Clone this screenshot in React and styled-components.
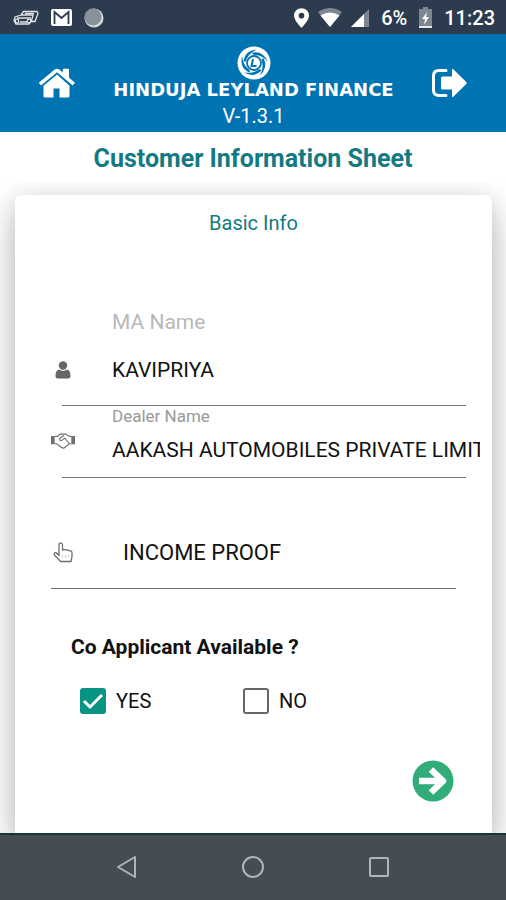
import React, { useState } from 'react';
import styled, { createGlobalStyle } from 'styled-components';

const GlobalStyle = createGlobalStyle`
  * {
    box-sizing: border-box;
  }
  body {
    margin: 0;
    background: #ffffff;
    font-family: Roboto, 'Liberation Sans', sans-serif;
    color: #111111;
  }
  button,
  input,
  select {
    font-family: inherit;
  }
`;

const Screen = styled.div`
  display: flex;
  flex-direction: column;
  min-height: 100vh;
`;

const StatusBar = styled.div`
  display: flex;
  align-items: center;
  justify-content: space-between;
  height: 34px;
  padding: 1px 11px 0 13px;
  background: #2c3b4d;
  color: #ffffff;
  font-size: 20px;
  font-weight: 500;
`;

const StatusGroup = styled.div`
  display: flex;
  align-items: center;
  gap: ${props => props.$gap}px;
`;

const Header = styled.header`
  display: flex;
  align-items: center;
  justify-content: space-between;
  height: 98px;
  padding: 0 38px;
  background: #0073b3;
  color: #ffffff;
`;

const IconButton = styled.button`
  display: flex;
  padding: 0;
  border: 0;
  background: none;
  color: inherit;
  cursor: pointer;
`;

const Brand = styled.div`
  display: flex;
  flex-direction: column;
  align-items: center;
  padding-top: 12px;
`;

const BrandName = styled.div`
  font-family: 'DejaVu Sans', sans-serif;
  font-size: 18px;
  font-weight: 700;
  line-height: 20px;
  white-space: nowrap;
`;

const Version = styled.div`
  font-size: 20px;
  line-height: 32px;
`;

const Title = styled.h1`
  margin: 0;
  padding-top: 3px;
  font-size: 25px;
  font-weight: 700;
  line-height: 47px;
  text-align: center;
  color: #127a80;
`;

const Main = styled.main`
  display: flex;
  flex: 1;
  padding: 13px 14px 0 15px;
  overflow: hidden;
`;

const Card = styled.form`
  flex: 1;
  min-width: 0;
  padding: 0 12px 0 36px;
  border-radius: 6px 6px 0 0;
  background: #ffffff;
  box-shadow: 0 16px 40px rgba(0, 0, 0, 0.24), 0 4px 20px rgba(0, 0, 0, 0.12);
`;

const Subtitle = styled.h2`
  margin: 0 24px 65px 0;
  padding-top: 14px;
  font-size: 20px;
  font-weight: 400;
  line-height: 28px;
  text-align: center;
  color: #127a80;
`;

const Field = styled.div`
  display: grid;
  grid-template-columns: 24px 1fr;
  column-gap: ${props => (props.$inset ? 48 : 37)}px;
  align-items: center;
  color: #666666;
`;

const Label = styled.label`
  grid-column: 2;
  font-size: ${props => (props.$small ? 17 : 21)}px;
  line-height: ${props => (props.$small ? 20 : 40)}px;
  color: ${props => (props.$small ? '#999999' : '#b8b8b8')};
`;

const FieldIcon = styled.span`
  display: flex;
  justify-content: center;
  align-self: ${props => (props.$top ? 'start' : 'center')};
  padding-top: ${props => (props.$top ? 6 : 0)}px;
`;

const TextInput = styled.input`
  width: 100%;
  min-width: 0;
  height: ${props => (props.$tall ? 56 : 48)}px;
  padding: 0;
  border: 0;
  outline: none;
  background: none;
  font-size: 21px;
  color: #111111;
`;

const Picker = styled.select`
  width: 100%;
  height: 72px;
  padding: 0;
  border: 0;
  outline: none;
  appearance: none;
  background: none;
  font-size: 22px;
  color: #111111;
`;

const Rule = styled.hr`
  height: 1px;
  margin: ${props => props.$gap || 0}px ${props => (props.$inset ? 14 : 24)}px 0
    ${props => (props.$inset ? 11 : 0)}px;
  border: 0;
  background: #777777;
`;

const Spacer = styled.div`
  height: 38px;
`;

const Choices = styled.fieldset`
  display: grid;
  grid-template-columns: 163px 1fr;
  margin: 0;
  padding: 0 0 0 29px;
  border: 0;
`;

const Question = styled.legend`
  margin-left: -9px;
  padding: 44px 0 27px;
  font-size: 21px;
  font-weight: 700;
  line-height: 28px;
`;

const Choice = styled.label`
  display: flex;
  align-items: center;
  gap: 10px;
  font-size: 20px;
  line-height: 26px;
`;

const Tick = styled.span`
  position: relative;
  width: 26px;
  height: 26px;
`;

const TickBox = styled.input`
  display: block;
  width: 26px;
  height: 26px;
  margin: 0;
  border: 2px solid #666666;
  border-radius: 3px;
  appearance: none;
  &:checked {
    border-color: #089482;
    background: #089482;
  }
`;

const TickMark = styled.svg`
  position: absolute;
  top: 0;
  left: 0;
  pointer-events: none;
`;

const Actions = styled.div`
  display: flex;
  justify-content: flex-end;
  padding: 46px 26px 30px 0;
`;

const NavBar = styled.nav`
  display: flex;
  align-items: center;
  justify-content: center;
  gap: 102px;
  height: 67px;
  padding-bottom: 2px;
  border-top: 2px solid #1d3434;
  background: #464d52;
  color: #b0b5b8;
`;

const CarIcon = () => (
  <svg width="26" height="18" viewBox="0 0 26 18" fill="none" stroke="#dfe2e6" strokeWidth="1.300">
    <path d="M8 6 10.500 2.500H24l1 2-3 8h-4M8 6l-6 2-1 4 2 3h13l2.500-3L20 6z" />
    <path d="M4 9h14M12 4.500h9M7 13h7" />
    <circle cx="4" cy="12" r="1.800" />
    <circle cx="16" cy="12" r="1.800" />
  </svg>
);

const MailIcon = () => (
  <svg width="21" height="17" viewBox="0 0 21 17">
    <rect width="21" height="17" rx="2" fill="#ffffff" />
    <path d="M3.500 15V3l7 6 7-6v12" fill="none" stroke="#2c3b4d" strokeWidth="1.800" />
  </svg>
);

const BallIcon = () => (
  <svg width="20" height="20" viewBox="0 0 20 20">
    <circle cx="10" cy="10" r="9.500" fill="#d5d8da" />
    <circle cx="9" cy="9" r="8.500" fill="#87919a" />
  </svg>
);

const PinIcon = () => (
  <svg width="15" height="20" viewBox="0 0 16 21">
    <path
      d="M8 0a8 8 0 0 0-8 8c0 5 8 13 8 13s8-8 8-13a8 8 0 0 0-8-8zm0 5a3 3 0 1 1 0 6 3 3 0 0 1 0-6z"
      fill="#ffffff"
      fillRule="evenodd"
    />
  </svg>
);

const WifiIcon = () => (
  <svg width="24" height="19" viewBox="0 0 24 19">
    <path d="M0 4q12-8 24 0L12 19z" fill="#7d8791" />
    <path d="M2.500 7.500q9.500-6 19 0L12 19z" fill="#ffffff" />
  </svg>
);

const SignalIcon = () => (
  <svg width="18" height="18" viewBox="0 0 18 18">
    <path d="M0 18 18 0v18z" fill="#7d8791" />
    <path d="M0 18 13 5v13z" fill="#ffffff" />
  </svg>
);

const BatteryIcon = () => (
  <svg width="13" height="21" viewBox="0 0 13 21">
    <path d="M4 0h5v2h4v19H0V2h4z" fill="#7d8791" />
    <path d="M0 19h13v2H0z" fill="#e8eaec" />
    <path d="M8 5 3 12h3l-1 6 5-8H7z" fill="#ffffff" />
  </svg>
);

const HomeIcon = () => (
  <svg width="38" height="30" viewBox="0 0 38 30" fill="currentColor">
    <path d="M19 6.500 5.500 17.700V28q0 1.500 1.500 1.500h8.500v-9h6v9H30q1.500 0 1.500-1.500V17.700z" />
    <path d="M36.400 14.200 31 9.600V1.500q0-.8-.8-.8h-4.600q-.8 0-.8.8v3L21.300 1.600q-2.300-1.900-4.600 0L1.300 14.200q-.6.5-.1 1.100l1.300 1.500q.5.600 1.100.1L19 4.300l15.200 12.600q.6.500 1.100-.1l1.300-1.500q.5-.6-.2-1.100z" />
  </svg>
);

const LogoutIcon = () => (
  <svg width="37" height="30" viewBox="0 0 37 30">
    <path
      d="M15 2.500H8q-5.500 0-5.500 5.500v14q0 5.500 5.500 5.500h7"
      fill="none"
      stroke="currentColor"
      strokeWidth="3"
      strokeLinecap="round"
    />
    <path
      d="M22 1 35.300 14q1 1 0 2L22 29q-1 .5-1-1v-6.500H11.500q-1.500 0-1.500-1.500V10q0-1.500 1.500-1.500H21V2q0-1.500 1-1z"
      fill="currentColor"
    />
  </svg>
);

const BrandMark = () => (
  <svg width="34" height="34" viewBox="0 0 34 34">
    <circle cx="17" cy="17" r="16.500" fill="#ffffff" />
    <g fill="#0073b3">
      {[0, 72, 144, 216, 288].map(angle => (
        <path
          key={angle}
          d="M6.500 15Q8 4.500 20 3.500 11.500 7 9 15q-1 1.500-2.500 0z"
          transform={`rotate(${angle} 17 17)`}
        />
      ))}
    </g>
    <circle cx="17" cy="17" r="7" fill="none" stroke="#0073b3" strokeWidth="1.800" />
    <path d="M16 13l-1.500 7h5" fill="none" stroke="#0073b3" strokeWidth="2" />
  </svg>
);

const PersonIcon = () => (
  <svg width="16" height="18" viewBox="0 0 16 18" fill="#666666">
    <circle cx="8" cy="4.500" r="4.200" />
    <path d="M4 8.500q4 2.800 8 0 3.500.6 3.500 6.500 0 2.500-2.500 2.500H3Q.5 17.500.5 15 .5 9.100 4 8.500z" />
  </svg>
);

const HandshakeIcon = () => (
  <svg width="26" height="18" viewBox="0 0 26 18" fill="none" stroke="#707070" strokeWidth="1.200">
    <path d="M1 3.500v9M3 3.500v9M25 3.500v9M23 3.500v9" strokeWidth="2" />
    <path d="M4 4h3l3-2.500h6L20 4h2M4 12h2l5.500 4q2 1.500 4-.5l4.500-3.500h2" />
    <path d="M14 3 9.500 6q-.5 3 2 2.500 2-1 3.500-2.500l5 6" />
  </svg>
);

const PointerIcon = () => (
  <svg width="20" height="21" viewBox="0 0 20 21" fill="none" stroke="#707070" strokeWidth="1.300">
    <path
      d="M6 12V3q0-2 1.700-2t1.800 2v5q1-1 2.500 0 1.500-1 2.500.5 1.500-.8 2.500.5 2-.3 2 2v3.500L18 19.500H7.500L1.500 13q-1-2 .7-2.500 1-.2 3.800 3z"
      strokeLinejoin="round"
    />
    <path d="M9.500 13v3M12.500 13v3M15.500 13v3" stroke="#d8d8d8" />
  </svg>
);

const NextIcon = () => (
  <svg width="42" height="42" viewBox="0 0 42 42">
    <circle cx="21" cy="21" r="20.500" fill="#31ad79" />
    <path d="M7 21h25" fill="none" stroke="#ffffff" strokeWidth="6.500" />
    <path
      d="M19 9.500 31 21 19 32.500"
      fill="none"
      stroke="#ffffff"
      strokeWidth="6.500"
      strokeLinejoin="round"
    />
  </svg>
);

const NavIcon = ({ children }) => (
  <svg width="24" height="24" viewBox="0 0 24 24" fill="none" stroke="currentColor" strokeWidth="2">
    {children}
  </svg>
);

const CheckOption = ({ label, checked, onChange }) => (
  <Choice>
    <Tick>
      <TickBox type="checkbox" checked={checked} onChange={onChange} />
      {checked && (
        <TickMark width="26" height="26" viewBox="0 0 26 26">
          <path d="M4 13l6 6L22 7" fill="none" stroke="#ffffff" strokeWidth="3" />
        </TickMark>
      )}
    </Tick>
    {label}
  </Choice>
);

export default () => {
  const [coApplicant, setCoApplicant] = useState(true);

  return (
    <Screen>
      <GlobalStyle />
      <StatusBar>
        <StatusGroup $gap={12}>
          <CarIcon />
          <MailIcon />
          <BallIcon />
        </StatusGroup>
        <StatusGroup $gap={12}>
          <StatusGroup $gap={9}>
            <PinIcon />
            <WifiIcon />
            <SignalIcon />
          </StatusGroup>
          <span>6%</span>
          <BatteryIcon />
          <span>11:23</span>
        </StatusGroup>
      </StatusBar>
      <Header>
        <IconButton type="button" aria-label="Home">
          <HomeIcon />
        </IconButton>
        <Brand>
          <BrandMark />
          <BrandName>HINDUJA LEYLAND FINANCE</BrandName>
          <Version>V-1.3.1</Version>
        </Brand>
        <IconButton type="button" aria-label="Log out">
          <LogoutIcon />
        </IconButton>
      </Header>
      <Title>Customer Information Sheet</Title>
      <Main>
        <Card>
          <Subtitle>Basic Info</Subtitle>
          <Field>
            <Label htmlFor="ma-name">MA Name</Label>
            <FieldIcon>
              <PersonIcon />
            </FieldIcon>
            <TextInput id="ma-name" $tall defaultValue="KAVIPRIYA" />
          </Field>
          <Rule $inset $gap={7} />
          <Field>
            <Label htmlFor="dealer-name" $small>
              Dealer Name
            </Label>
            <FieldIcon $top>
              <HandshakeIcon />
            </FieldIcon>
            <TextInput id="dealer-name" defaultValue="AAKASH AUTOMOBILES PRIVATE LIMITED" />
          </Field>
          <Rule $inset $gap={3} />
          <Spacer />
          <Field $inset>
            <FieldIcon>
              <PointerIcon />
            </FieldIcon>
            <Picker aria-label="Proof type" defaultValue="income">
              <option value="income">INCOME PROOF</option>
            </Picker>
          </Field>
          <Rule />
          <Choices>
            <Question>Co Applicant Available ?</Question>
            <CheckOption label="YES" checked={coApplicant} onChange={() => setCoApplicant(true)} />
            <CheckOption label="NO" checked={!coApplicant} onChange={() => setCoApplicant(false)} />
          </Choices>
          <Actions>
            <IconButton type="button" aria-label="Next">
              <NextIcon />
            </IconButton>
          </Actions>
        </Card>
      </Main>
      <NavBar>
        <IconButton type="button" aria-label="Back">
          <NavIcon>
            <path d="M20 2v20L3 12z" strokeLinejoin="round" />
          </NavIcon>
        </IconButton>
        <IconButton type="button" aria-label="Home screen">
          <NavIcon>
            <circle cx="12" cy="12" r="10" />
          </NavIcon>
        </IconButton>
        <IconButton type="button" aria-label="Recent apps">
          <NavIcon>
            <rect x="3" y="3" width="18" height="18" rx="1" />
          </NavIcon>
        </IconButton>
      </NavBar>
    </Screen>
  );
};
